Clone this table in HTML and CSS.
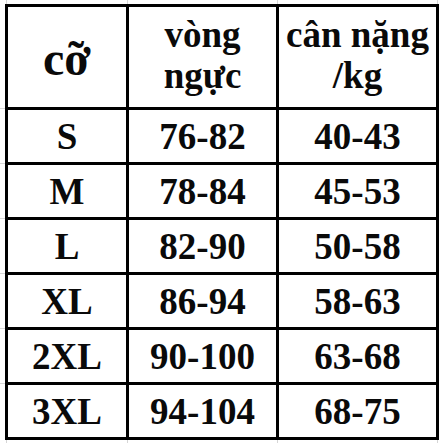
FILE: index.html
```html
<!DOCTYPE html>
<html lang="vi">
<head>
<meta charset="utf-8">
<title>Bảng cỡ</title>
<link rel="stylesheet" href="styles.css">
</head>
<body>
<div class="sheet">
  <div class="table">
    <div class="cell head big">cỡ</div>
    <div class="cell head">vòng<br>ngực</div>
    <div class="cell head">cân nặng<br>/kg</div>

    <div class="cell">S</div>
    <div class="cell">76-82</div>
    <div class="cell">40-43</div>

    <div class="cell">M</div>
    <div class="cell">78-84</div>
    <div class="cell">45-53</div>

    <div class="cell">L</div>
    <div class="cell">82-90</div>
    <div class="cell">50-58</div>

    <div class="cell">XL</div>
    <div class="cell">86-94</div>
    <div class="cell">58-63</div>

    <div class="cell">2XL</div>
    <div class="cell">90-100</div>
    <div class="cell">63-68</div>

    <div class="cell">3XL</div>
    <div class="cell">94-104</div>
    <div class="cell">68-75</div>
  </div>
</div>
</body>
</html>
```
FILE: styles.css
```css
html, body {
  margin: 0;
  padding: 0;
  background: #fff;
}

body {
  width: 443px;
  height: 443px;
  overflow: hidden;
  background-color: #fff;
  background-image:
    /* faint spreadsheet gridlines outside the table */
    repeating-linear-gradient(to bottom, transparent 0 54px, #d6d6d6 54px 55px),
    linear-gradient(#d6d6d6, #d6d6d6),
    linear-gradient(#d6d6d6, #d6d6d6),
    linear-gradient(#d6d6d6, #d6d6d6),
    linear-gradient(#d6d6d6, #d6d6d6),
    linear-gradient(#d6d6d6, #d6d6d6),
    linear-gradient(#d6d6d6, #d6d6d6),
    linear-gradient(#d6d6d6, #d6d6d6),
    linear-gradient(#d6d6d6, #d6d6d6);
  background-size:
    5px 340px,
    1px 4px,
    1px 4px,
    1px 4px,
    1px 4px,
    1px 4px,
    1px 4px,
    1px 4px,
    1px 4px;
  background-position:
    0 54px,
    6px 0,
    127px 0,
    277px 0,
    437px 0,
    6px 439px,
    127px 439px,
    277px 439px,
    437px 439px;
  background-repeat: no-repeat;
}

.sheet {
  padding: 4px 0 0 5px;
}

.table {
  display: grid;
  grid-template-columns: 118px 147px 157px;
  grid-template-rows: 100px repeat(6, 52px);
  gap: 3px;
  padding: 3px;
  width: max-content;
  background: #000;
}

.cell {
  background: #fff;
  display: flex;
  align-items: center;
  justify-content: center;
  text-align: center;
  font-family: "Liberation Serif", "Times New Roman", serif;
  font-weight: bold;
  font-size: 37px;
  color: #0a0a0a;
  white-space: nowrap;
}

.head {
  font-size: 37px;
  line-height: 41px;
  padding-bottom: 4px;
}

.big {
  font-size: 48px;
  line-height: normal;
  padding-bottom: 0;
  padding-top: 2px;
}
```
